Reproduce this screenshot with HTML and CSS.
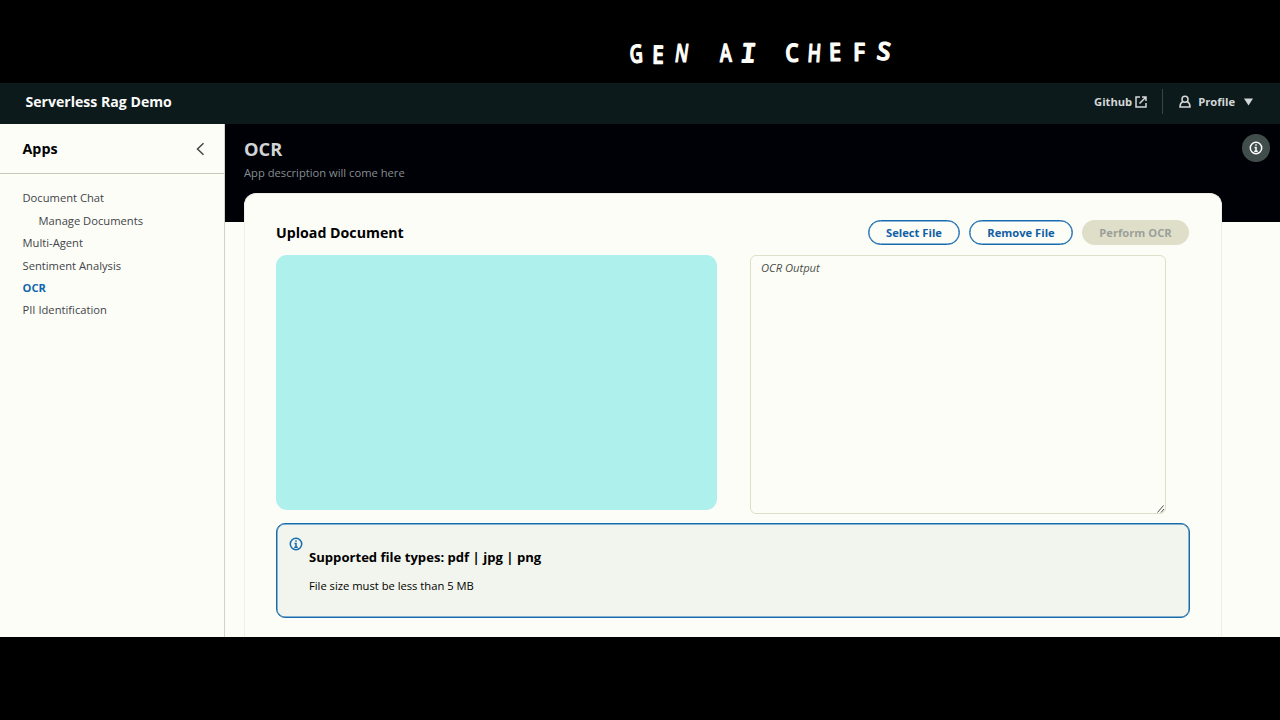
FILE: index.html
```html
<!DOCTYPE html>
<html lang="en">
<head>
<meta charset="utf-8">
<title>Serverless Rag Demo</title>
<link rel="stylesheet" href="styles.css">
</head>
<body>
<div class="banner" aria-label="GEN AI CHEFS">
  <svg class="wordmark" width="290" height="45" viewBox="0 0 290 45">
    <g class="letters">
      <text transform="translate(10 33) rotate(-3) scale(.74 1)">G</text>
      <text transform="translate(32 33.500) rotate(1) scale(.84 1)">E</text>
      <text transform="translate(54 32) skewX(-8) scale(.68 1)">N</text>
      <text transform="translate(100 32) rotate(-2) scale(.72 1)">A</text>
      <text class="serif" transform="translate(120 32) skewX(-6) scale(1 1)">I</text>
      <text transform="translate(165.500 32) rotate(-2) scale(.86 1)">C</text>
      <text transform="translate(187 31.500) skewX(-4) scale(.72 1)">H</text>
      <text transform="translate(209 31) rotate(-1) scale(.88 1)">E</text>
      <text transform="translate(233 31) rotate(0) scale(.92 1)">F</text>
      <text transform="translate(256 29) rotate(8) scale(.98 1)">S</text>
    </g>
  </svg>
</div>
<header class="topbar">
  <div class="product">Serverless Rag Demo</div>
  <div class="tools">
    <a class="github">Github <svg width="12" height="12" viewBox="0 0 12 12"><path d="M5 1H1v10h10V7M7 1h4v4M11 1L4.5 7.5"/></svg></a>
    <a class="profile"><svg width="12" height="14" viewBox="0 0 12 14"><circle cx="6" cy="4.2" r="3"/><path d="M3.9 6.5C2 7.5 1 9.200 1 12h10c0-2.800-1-4.500-2.900-5.500"/></svg><span>Profile</span><svg class="caret" width="9" height="8" viewBox="0 0 9 8"><path d="M0 .5h9L4.500 7.500z"/></svg></a>
  </div>
</header>
<div class="shell">
  <nav class="side">
    <div class="side-head"><h2>Apps</h2><svg width="9" height="14" viewBox="0 0 9 14"><path d="M7.500 1.200L1.500 7l6 5.800"/></svg></div>
    <ul>
      <li>Document Chat</li>
      <li class="child">Manage Documents</li>
      <li>Multi-Agent</li>
      <li>Sentiment Analysis</li>
      <li class="active">OCR</li>
      <li>PII Identification</li>
    </ul>
  </nav>
  <main class="main">
    <div class="hero">
      <div><h1>OCR</h1><p>App description will come here</p></div>
      <span class="help"><svg width="14" height="14" viewBox="0 0 14 14"><circle cx="7" cy="7" r="5.700"/><path d="M7 3.300v1.500M5.500 6.500H7v4M5.300 10.200h3.400"/></svg></span>
    </div>
    <section class="card">
      <div class="card-head">
        <h3>Upload Document</h3>
        <div class="buttons"><button class="select">Select File</button><button class="remove">Remove File</button><button class="perform" disabled>Perform OCR</button></div>
      </div>
      <div class="panes">
        <div class="preview"></div>
        <div class="output"><span>OCR Output</span><svg width="8" height="8" viewBox="0 0 8 8"><path d="M.5 7.500l6-7M4 7.500l3-3.500"/></svg></div>
      </div>
      <div class="alert">
        <svg width="14" height="14" viewBox="0 0 14 14"><circle cx="7" cy="7" r="5.700"/><path d="M7 3.300v1.500M5.500 6.500H7v4M5.300 10.200h3.400"/></svg>
        <div><h4>Supported file types: pdf | jpg | png</h4><p>File size must be less than 5 MB</p></div>
      </div>
    </section>
  </main>
</div>
</body>
</html>
```
FILE: styles.css
```css
* { box-sizing: border-box; }
body { margin: 0; width: 1280px; height: 720px; overflow: hidden; background: #000; color: #000; font-family: "Open Sans", "Noto Sans", sans-serif; font-size: 11.2px; }
h1, h2, h3, h4, p, ul { margin: 0; padding: 0; }
svg { fill: none; stroke: currentColor; stroke-width: 1.5; flex: none; }
.banner { height: 83px; padding: 30px 0 0 620px; }
.wordmark { display: block; }
.letters { fill: #fffffa; stroke: #fffffa; stroke-width: 1.2; stroke-linejoin: round; font: 600 25px "Open Sans", sans-serif; }
.letters .serif { font-family: "DejaVu Sans Mono", monospace; font-weight: 400; stroke-width: 2; }
.topbar { height: 41px; padding: 0 27px 4px 25px; display: flex; align-items: center; justify-content: space-between; background: #0d1a1c; color: #d3d7d7; font-weight: 700; }
.product { padding-left: .5px; color: #fafafa; font-size: 14.1px; }
.tools { display: flex; align-items: center; height: 25px; }
.github { display: flex; align-items: center; gap: 3px; padding-right: 15px; height: 25px; border-right: 1px solid #38434b; }
.profile { display: flex; align-items: center; padding-left: 16px; }
.profile span { margin: 0 9px 0 7px; }
.caret { fill: currentColor; stroke: none; }
.shell { height: 513px; display: flex; background: #fdfdf8; }
.side { width: 225px; border-right: 1px solid #d2d2cb; }
.side-head { height: 50px; padding: 0 19px 0 22.5px; display: flex; align-items: center; justify-content: space-between; border-bottom: 1px solid #c9c9bb; color: #444; }
.side-head h2 { color: #000; font-size: 14.3px; }
.side ul { list-style: none; padding: 13.4px 0 0 22.5px; line-height: 22.4px; color: #3f4548; }
.child { padding-left: 16px; }
.active { color: #1266ad; font-weight: 700; }
.main { flex: 1; min-width: 0; }
.hero { height: 98px; padding: 10px 10px 0 19px; display: flex; justify-content: space-between; background: #000007; color: #d1d5d5; }
.hero h1 { font-size: 18.3px; line-height: 30px; }
.hero p { line-height: 18px; color: #858f90; }
.help { width: 28px; height: 28px; border-radius: 50%; background: #414d4b; color: #fff; display: flex; align-items: center; justify-content: center; }
.card { position: relative; margin: -29px 58px 0 19px; height: 444px; padding: 26px 32px 0 31px; background: #fdfdf8; border: 1px solid #efefe8; border-bottom: 0; border-radius: 12px 12px 0 0; }
.card-head { display: flex; justify-content: space-between; align-items: center; height: 25px; }
.card h3 { font-size: 14.2px; }
.buttons { display: flex; gap: 9px; }
button { height: 25px; padding: 0; border: 1px solid #176cae; border-radius: 13px; background: transparent; box-shadow: inset 0 0 0 .5px #176cae; font: 700 11.2px "Open Sans", sans-serif; color: #115fa5; }
.select { width: 92px; }
.remove { width: 104px; }
.perform { width: 107px; border: 0; background: #dfdfc9; box-shadow: none; color: #9c9f99; }
.panes { display: flex; gap: 33px; margin-top: 10px; }
.preview { width: 441px; height: 255px; border-radius: 11px; background: #aef0eb; }
.output { width: 416px; height: 259px; padding: 4px 0 0 10px; display: flex; justify-content: space-between; border: 1px solid #dddfc9; border-radius: 6px; font-style: italic; line-height: 16px; color: #4b4f4b; }
.output svg { align-self: flex-end; stroke-width: 1; }
.alert { width: 914px; height: 95px; margin-top: 9px; padding: 13px 12px; display: flex; gap: 6px; border: 1px solid #176cae; border-radius: 9px; background: #f2f5ed; box-shadow: inset 0 0 0 .5px #176cae; }
.alert svg { color: #176cae; }
.alert h4 { margin-top: 10px; font-size: 13.1px; line-height: 20px; }
.alert p { margin-top: 10px; line-height: 18px; }
```
